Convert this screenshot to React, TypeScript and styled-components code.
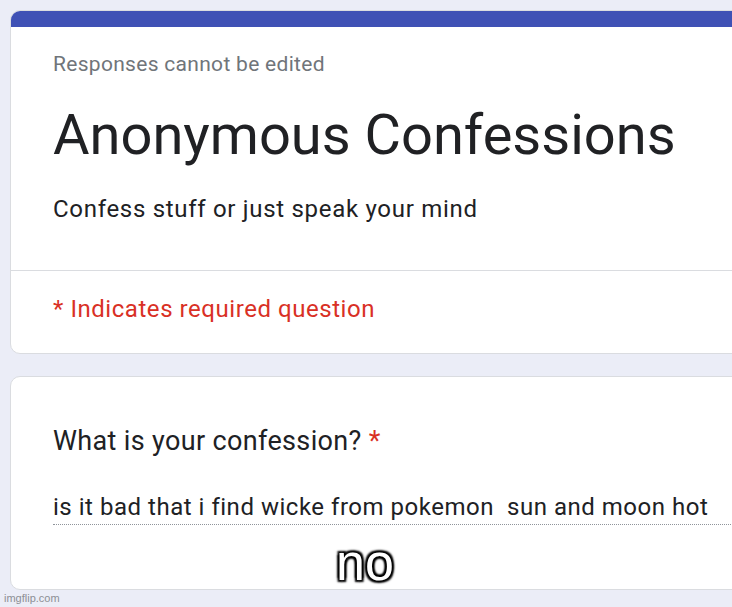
import React, { FC } from "react";
import styled, { createGlobalStyle } from "styled-components";

const GlobalStyle = createGlobalStyle`
  html, body {
    margin: 0;
    padding: 0;
    background: #ebedf7;
    overflow: hidden;
  }
  body {
    font-family: Roboto, "Noto Sans", Arial, sans-serif;
    color: #202124;
  }
`;

const Page = styled.div`
  position: relative;
  width: 732px;
  height: 607px;
  overflow: hidden;
  padding: 10px 0 0 10px;
  box-sizing: border-box;
  display: flex;
  flex-direction: column;
  gap: 22px;
`;

const Card = styled.div`
  width: 780px;
  background: #fff;
  border: 1px solid #dadce0;
  border-radius: 10px;
  box-sizing: border-box;
  overflow: hidden;
  display: flex;
  flex-direction: column;
`;

const TopBar = styled.div`
  height: 17px;
  background: #3f51b5;
  margin: -1px -1px 0 -1px;
`;

const CardBody = styled.div<{ $padding: string }>`
  display: flex;
  flex-direction: column;
  padding: ${(p) => p.$padding};
`;

const Note = styled.div`
  font-size: 21px;
  line-height: 24px;
  letter-spacing: 0.3px;
  color: #70757a;
`;

const Title = styled.h1`
  margin: 27px 0 0;
  font-weight: 400;
  font-size: 56px;
  line-height: 64px;
  color: #202124;
`;

const Description = styled.div`
  margin-top: 27px;
  font-size: 24px;
  line-height: 30px;
  letter-spacing: 0.7px;
  color: #202124;
`;

const Divider = styled.div`
  height: 1px;
  background: #dadce0;
`;

const Required = styled.div`
  font-size: 24px;
  line-height: 30px;
  letter-spacing: 0.55px;
  color: #d93025;
`;

const Question = styled.div`
  font-size: 27px;
  line-height: 34px;
  letter-spacing: 0.35px;
  color: #202124;
`;

const Star = styled.span`
  color: #d93025;
`;

const Answer = styled.div`
  margin-top: 34px;
  font-size: 24px;
  line-height: 30px;
  letter-spacing: 0.52px;
  color: #202124;
  padding-bottom: 2px;
  border-bottom: 1px dotted #8f949a;
  white-space: pre;
`;

const Watermark = styled.div`
  position: absolute;
  left: 4px;
  bottom: 3px;
  font-family: "Liberation Sans", Arial, sans-serif;
  font-size: 11px;
  color: #8d8f95;
`;

const Caption = styled.div`
  position: absolute;
  left: 336px;
  top: 532px;
  font-family: "Liberation Sans", Arial, sans-serif;
  font-size: 52px;
  line-height: 60px;
  color: #fff;
  text-shadow: 2px 2px 2px #000, -2px -2px 2px #000, 2px -2px 2px #000,
    -2px 2px 2px #000, 0 0 3px #000;
`;

const App: FC = () => {
  return (
    <>
      <GlobalStyle />
      <Page>
        <Card>
          <TopBar />
          <CardBody $padding="25px 0 46px 42px">
            <Note>Responses cannot be edited</Note>
            <Title>Anonymous Confessions</Title>
            <Description>Confess stuff or just speak your mind</Description>
          </CardBody>
          <Divider />
          <CardBody $padding="23px 0 29px 42px">
            <Required>* Indicates required question</Required>
          </CardBody>
        </Card>
        <Card>
          <CardBody $padding="47px 0 64px 42px">
            <Question>
              What is your confession? <Star>*</Star>
            </Question>
            <Answer>is it bad that i find wicke from pokemon  sun and moon hot</Answer>
          </CardBody>
        </Card>
        <Caption>no</Caption>
        <Watermark>imgflip.com</Watermark>
      </Page>
    </>
  );
};

export default App;
